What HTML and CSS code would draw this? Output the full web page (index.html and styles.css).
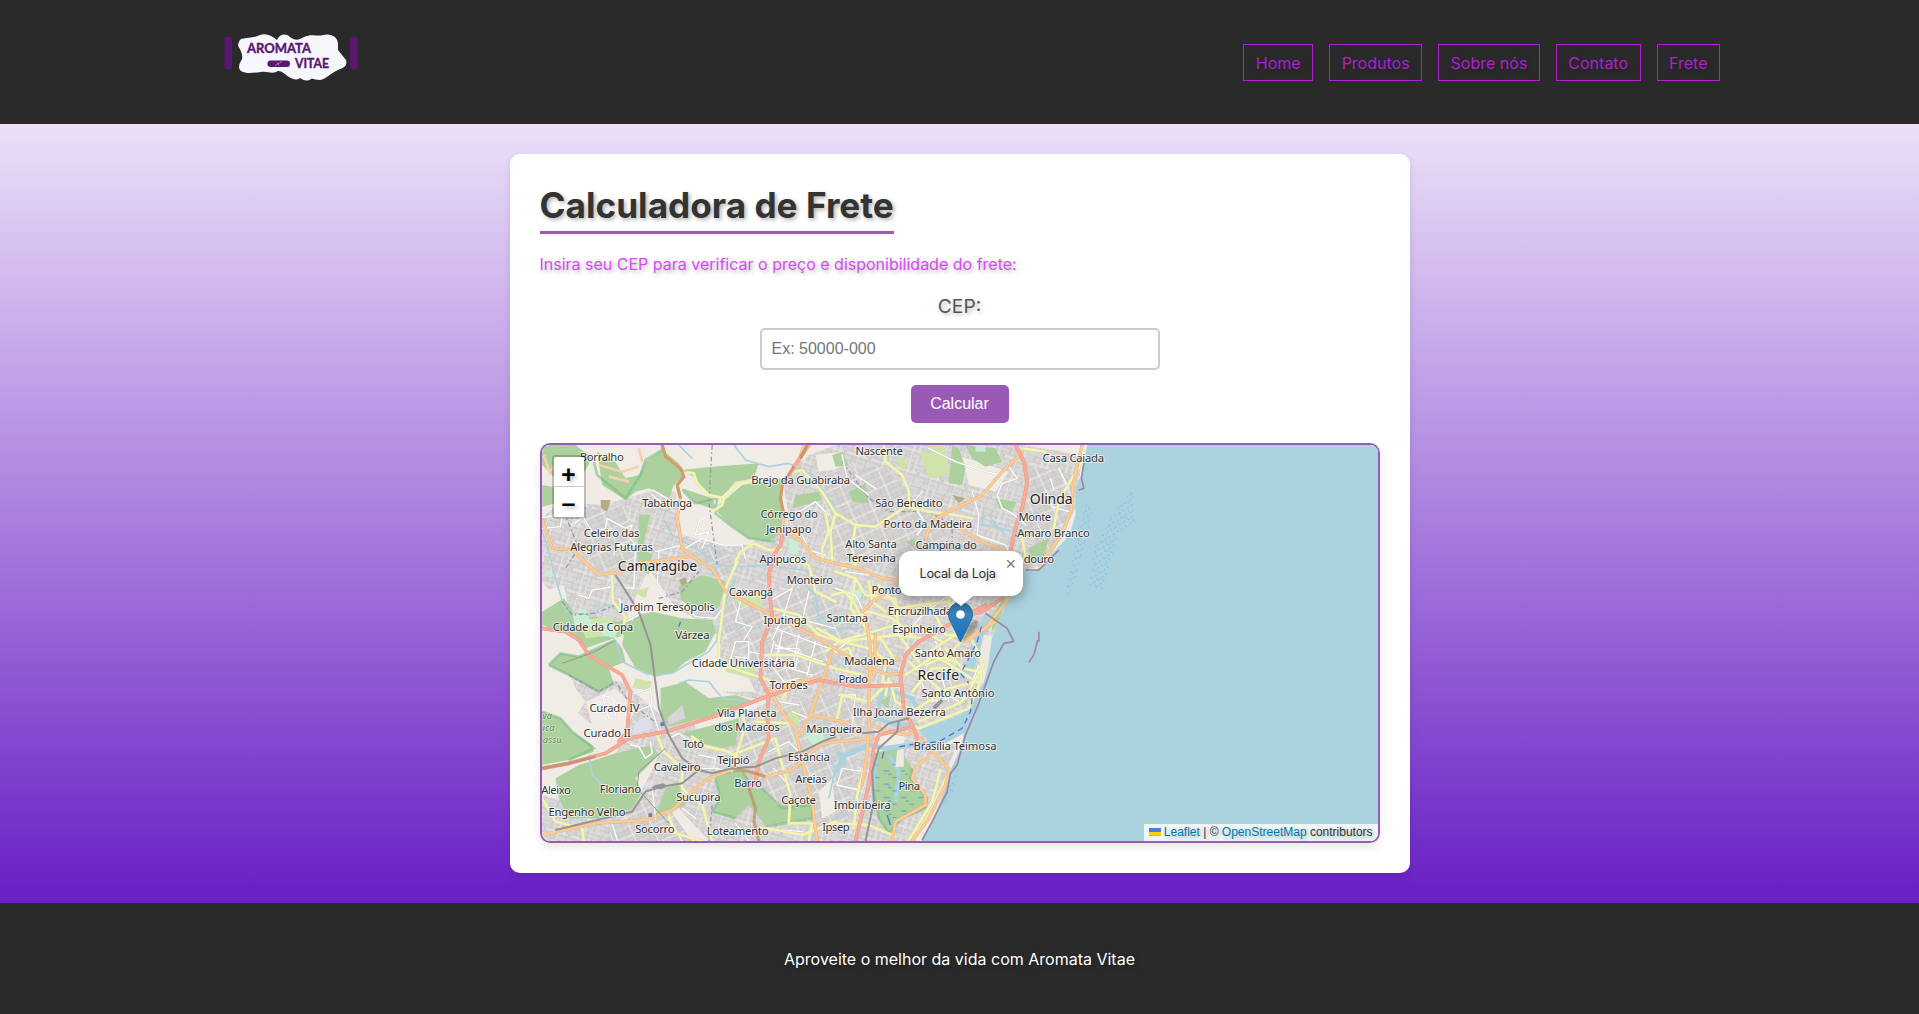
FILE: index.html
```html
<!DOCTYPE html>
<html lang="pt-BR">
<head>
<meta charset="utf-8">
<title>Aromata Vitae - Frete</title>
<link rel="stylesheet" href="styles.css">
</head>
<body>
<header class="header">
  <a class="logo" href="#" aria-label="Aromata Vitae">
    <svg viewBox="0 0 135 50" width="135" height="50">
      <rect class="logo-bar" x="0.5" y="2.5" width="7.5" height="33" rx="3"/>
      <rect class="logo-bar" x="126" y="2.5" width="7.5" height="33" rx="3"/>
      <path class="logo-cloud" d="M17 5C24 3 30 4 36 1C43-1 48 2 53 6C56 0 61-1 66 3C72 8 76 5 80 3C88-1 94 3 99 1C107-1 114 3 114 10V16L122 26C124 32 119 34 114 36C107 39 102 45 96 46C91 46 89 44 87 45C83 48 79 46 76 44C72 47 69 45 65 43C60 40 56 35 52 38C47 40 43 37 37 38C29 39 22 40 17 37C13 33 16 29 18 25C19 21 17 18 16 15C13 12 14 8 17 5Z"/>
      <text class="logo-text" x="23" y="18.5" textLength="64" lengthAdjust="spacingAndGlyphs">AROMATA</text>
      <text class="logo-text" x="71" y="34" textLength="34" lengthAdjust="spacingAndGlyphs">VITAE</text>
      <rect class="logo-bar" x="43.5" y="26.5" width="22.5" height="6.5" rx="3.2"/>
      <path class="logo-sprig" d="M51 31.5L58 27.5M53 28.5L55 31.5"/>
    </svg>
  </a>
  <nav class="nav">
    <a href="#">Home</a><a href="#">Produtos</a><a href="#">Sobre nós</a><a href="#">Contato</a><a href="#">Frete</a>
  </nav>
</header>
<main class="main">
  <section class="card">
    <h1 class="title">Calculadora de Frete</h1>
    <p class="intro">Insira seu CEP para verificar o preço e disponibilidade do frete:</p>
    <form class="form">
      <label class="label" for="cep">CEP:</label>
      <input class="input" id="cep" type="text" placeholder="Ex: 50000-000">
      <button class="button" type="button">Calcular</button>
    </form>
    <div class="map">
      <svg class="map-tiles" viewBox="19.5 30 2508 1188" preserveAspectRatio="none">
        <defs>
          <pattern id="blocks" width="76" height="64" patternUnits="userSpaceOnUse" patternTransform="rotate(17)">
            <rect width="76" height="64" fill="#dbd9d8"/>
            <path d="M0 8H76M0 24H34M40 20H76M0 40H76M0 54H50M10 0V24M26 8V40M44 0V40M60 20V64M36 40V64M16 40V64" stroke="#c8c5c3" stroke-width="2.6" fill="none"/>
            <path d="M0 32H76M34 0V64M52 0V30" stroke="#ececeb" stroke-width="2.4" fill="none"/>
            <path d="M4 12h5v8h-5zM64 26h8v10h-8zM20 44h12v6H20z" fill="#cdcac8"/>
          </pattern>
          <pattern id="blocks-b" width="62" height="54" patternUnits="userSpaceOnUse" patternTransform="rotate(-24)">
            <rect width="62" height="54" fill="#d7d5d4"/>
            <path d="M0 6H62M0 15H62M0 33H30M0 42H62M8 0V54M18 0V27M38 10V54M50 0V40" stroke="#c5c2c0" stroke-width="2.4" fill="none"/>
            <path d="M0 25H62M28 0V54" stroke="#eeeeed" stroke-width="2.6" fill="none"/>
          </pattern>
          <pattern id="reef" width="20" height="22" patternUnits="userSpaceOnUse" patternTransform="rotate(15)">
            <path d="M2 3h3v3h-3zM12 12h3v4h-3zM8 19h3v2h-3zM17 1h2v3h-2z" fill="#72b2dc"/>
          </pattern>
          <pattern id="marsh" width="52" height="40" patternUnits="userSpaceOnUse">
            <path d="M4 8h18M30 28h14M18 18h10" stroke="#459fe0" stroke-width="3"/>
          </pattern>
          <g id="street">
            <path d="M20 248L80 238L75 275L20 280M118 265L142 245L170 290L210 280L215 250L270 280L290 270L275 300L300 330L295 460L262 458M300 330L240 330L235 360M360 350L440 330M370 350L365 460L400 505M80 190L145 165M352 165L395 190L390 210L350 180M480 300L520 290L500 340M440 345L500 310L560 330L620 330L630 370M480 300L490 260L520 240M130 480L160 490L170 465L235 455M440 500L480 545L540 550L560 520M250 490L290 555M250 490L270 560L310 540M620 480L600 560L650 575L625 615M770 460L745 540L710 615M770 460L700 500M820 470L800 560M745 540L900 580M840 200L800 225L760 240M840 200L880 240M800 300L820 345L870 360"/>
            <path d="M920 60L935 130L1000 180M960 120L1020 160M1180 40L1260 80L1350 110L1400 120L1420 85M1420 95L1445 130L1400 145L1385 180L1400 220L1430 235L1470 270M1310 170L1330 240L1325 300M1325 300L1410 330L1420 350M1530 165L1550 215L1600 230M1545 130L1555 165M1130 205L1170 265L1145 300M1160 170L1130 205M1570 100L1600 160M930 410L1000 420M900 460L960 480L1000 560M1110 600L1160 540L1240 480M1260 490L1230 540L1310 560M900 650L960 600"/>
            <path d="M580 690L600 620L640 620L640 670L600 665M640 650L690 660M715 620L700 680L745 740L790 730M720 640L790 640L780 700M770 830L820 850M730 800L790 810M200 780L235 790L240 840L220 850L200 780M295 775L345 760L350 810L300 830M340 800L375 900M285 930L310 935L330 970L350 955L345 920M400 910L430 895L450 910M490 960L540 970L535 1000L500 1000M540 1000L590 1010M700 950L760 920L790 950M715 1000L750 1040M910 780L960 780L950 870M905 1050L920 1000L985 1010L970 1065L905 1050M1150 720L1180 800L1240 790M1220 730L1240 800M1200 620L1250 700M1330 690L1300 770M1200 760L1270 800M440 1120L480 1150M230 1165L245 1215M400 1150L440 1218M600 1165L640 1218M690 1180L800 1190M350 1060L360 1150M1000 870L1030 890M1170 960L1140 1010M740 590L720 690M790 600L770 700M840 620L815 720M720 580L880 640M720 630L860 680M700 680L830 720"/>
          </g>
          <g id="secondary">
            <path d="M455 112L475 115L485 145L520 180L560 188L610 145L650 138M565 190L560 210L530 230M600 380L615 350L655 325L700 345L735 345M605 380L570 460L550 615M230 420L232 500L270 545L265 570M765 115L800 105L860 170L900 235L960 270L1020 275L1110 215L1180 230L1230 235L1310 250M870 235L880 290L860 340L862 380M900 235L885 290L890 380M1045 30L1050 80L1100 120L1120 170L1120 200M960 270L950 340L960 390L920 400M760 370L820 390L840 470L900 500M710 520L790 540L850 600L900 615M1640 80L1570 195L1555 280M1460 40L1530 50M1455 290L1470 360L1440 420"/>
            <path d="M890 480L930 470L960 510L1000 600L1040 615L1080 680M900 410L960 430L990 480L1080 490M930 560L1000 530L1070 550L1130 600M960 430L945 520L1000 590M1000 440L1010 500L1050 530M900 560L960 540M1030 450L1090 520L1150 510L1240 500M1080 490L1090 600L1150 680M1180 500L1230 600L1300 600M1140 570L1220 620M1240 490L1260 600L1180 650M900 615L1000 640L1060 680M900 650L940 640L960 690M1000 620L1050 690L1040 740L1100 760M1230 640L1280 700L1330 710M1130 640L1230 680L1330 745M1170 690L1240 660L1280 615M1120 680L1220 770L1290 790M1110 720L1200 660L1260 680M1130 770L1190 700L1240 700M1310 615L1340 680L1335 740L1300 820L1150 880L1130 870M1345 690L1280 800L1150 860M1065 740L1080 800L1140 830M1130 830L1240 760L1320 740M560 690L700 735M550 615L550 690M690 660L780 660L900 700L980 720M700 740L760 760M615 820L630 870L600 970M660 860L770 865M590 960L720 910L740 990L765 1080L760 1160M470 905L510 935L580 950L600 970M365 900L385 950L440 1000L440 1060L500 1110L530 1218M760 760L740 790M580 1190L700 1180L800 1200L900 1160M1215 1005L1190 1100L1120 1215M1240 1005L1200 1110L1130 1215M985 1000L965 1080L955 1180M900 1165L1000 1170L1080 1205M820 1218L830 1165L760 1165M400 1145L420 1195L500 1218M20 1090L60 1160L140 1180L145 1218M905 850L920 780L1000 800L1040 760M1050 780L1060 730M845 580L920 620L1080 600L1160 610M870 650L910 620L1080 570"/>
          </g>
          <g id="primary">
            <path d="M380 30L390 65L435 100L445 125L425 150L435 190L425 250L440 340L500 385L530 400L570 470L650 510L710 540L830 600L900 640M20 255L50 340L110 345L190 420L260 410L310 385L460 365M755 290L800 320L840 370L900 385L970 400L1040 430L1090 435M805 30L790 80L740 150L735 190L745 240L740 290M1460 55L1400 110L1340 180L1270 215L1220 240L1190 260L1170 310M1260 275L1340 320L1420 355M1640 30L1630 70L1615 140L1605 230L1580 300L1540 350L1510 390M1380 560L1290 610M1420 490L1350 580L1290 620M980 530L1010 500L1060 470"/>
            <path d="M900 640L960 680L1005 700L1060 720L1095 715M990 540L1005 640L1000 800L1000 870L995 950L980 1050M1020 600L1015 720M700 760L740 830L780 880L795 960L830 1100L845 1218M890 650L860 740L820 850L790 900M715 770L780 740L850 730M940 865L830 840M20 1200L180 1165L330 1155L410 1125L480 1060L520 1030L600 1000L690 1025L770 1005L850 930L900 920L1020 910M1135 890L1170 930L1240 1000L1230 1050L1180 1150L1130 1218M1180 960L1140 1000L1130 1030L1170 1080L1170 1110L1080 1160L1070 1218M1000 870L1060 890L1110 900L1135 890M1010 660L1060 690L1090 670"/>
          </g>
          <g id="trunk">
            <path d="M820 30L775 95M740 300L735 330L715 360L700 420L705 500L710 540L690 600L680 620L675 730L700 780L695 840L700 910L670 980L660 1040L640 1060M1440 30L1465 80L1475 140L1465 200L1440 280L1420 370M1400 490L1340 530L1260 550M1350 510L1230 575L1150 620L1110 660L1095 720L1105 820L1135 880L1145 910M20 580L90 590L130 615L160 660L260 720L285 770L275 890L250 920M20 1000L100 985L210 955L280 910L390 890L550 840L680 790L780 755L850 735L960 755L1100 750M1130 875L1030 900L1015 940L1000 1050L960 1218"/>
          </g>
        </defs>
        <rect x="19" y="30" width="2510" height="1190" fill="#f0ece5"/>
        <path fill="url(#blocks)" d="M20 250L70 200L200 210L340 170L420 170L440 300L560 330L640 330L760 240L740 130L820 60L900 30H1460L1640 60L1620 220L1540 380L1440 420L1400 560V615L1330 700L1320 800L1180 920L1240 1000L1140 1218H520L430 1120L290 1218H20V1080L130 1110L300 1110L370 960L230 980L300 820L240 760L150 800L170 870L110 820L100 720L260 740L400 860L460 850L500 900L700 800L560 770L570 700L500 560L420 520L340 400L250 600L150 620L100 530L20 440Z"/>
        <path fill="url(#blocks-b)" d="M870 120L1040 90L1150 200L1240 300L1170 380L940 400L860 300ZM1470 90L1620 120L1590 280L1530 350L1460 300ZM560 500L850 450L950 560L880 760L700 720L560 600ZM620 860L900 760L980 850L930 1200L700 1150L560 960ZM130 230L270 210L310 400L180 410ZM440 350L560 330L600 380L560 440ZM290 1090L400 1120L470 1218H210ZM1150 800L1240 720L1340 740L1280 820ZM1200 940L1270 920L1230 1010Z"/>
        <path fill="#f0ede5" d="M450 30H780V90L700 95L670 85L530 95L445 90ZM1280 65L1420 110L1380 170L1300 150ZM20 470L85 450L100 520L20 530ZM20 720L100 710L120 760L150 800L110 860L60 870L20 830ZM430 680L540 600L560 690L640 730L660 770L560 770L480 740L400 750ZM160 40L260 30L320 60L300 120L260 110ZM840 60L920 50L910 100L850 110ZM1060 1100L1000 1000L1020 890L1110 900L1100 940ZM850 1070L890 1030L900 1130L860 1150Z"/>
        <g fill="#add19e">
          <path d="M20 30H120L170 70L130 140L80 150L20 90ZM185 50L240 80L270 130L310 120L330 80L380 45L430 85L445 120L415 150L400 190L340 160L300 170L270 195L200 150ZM440 105L530 95L670 85L655 130L600 140L560 185L520 180L480 130ZM550 210L620 150L740 130L735 200L745 290L700 320L640 310L580 265L545 230ZM440 160L530 190L545 225L480 205ZM20 150L75 160L60 205L20 215ZM310 240L345 240L320 340L350 360L340 420L305 390ZM430 455L500 420L570 440L550 520L440 510Z"/>
          <path d="M20 530L85 490L130 550L180 545L250 560L310 540L350 530L440 550L530 555L540 590L510 650L450 680L410 715L360 725L300 700L260 630L265 600L150 640L110 600L20 570ZM40 690L75 655L130 665L240 615L260 640L270 680L220 700L235 745L190 770L110 725ZM375 760L450 740L520 790L600 780L660 800L620 820L480 855L400 875L375 840ZM20 830L75 850L110 890L170 930L175 950L100 975L20 990ZM60 1030L130 990L240 955L350 930L370 960L300 1030L320 1070L290 1120L190 1150L100 1150L70 1090ZM440 895L610 850L600 930L560 940L500 925ZM390 1060L430 1050L450 1110L400 1130L360 1140ZM540 1020L620 1005L650 1060L680 1060L720 1110L830 1110V1150L740 1165L690 1170L640 1110L600 1150L530 1130L555 1090Z"/>
          <path d="M1015 955L1090 935L1130 1000L1125 1030L1175 1090L1170 1120L1100 1150L1060 1195L1030 1150L1005 1020ZM1250 30L1270 40L1290 100L1280 150L1240 145ZM1290 30L1380 40L1400 80L1350 95L1310 70ZM940 170L990 145L1000 205L950 200ZM1380 190L1440 200L1430 235L1390 220ZM1480 340L1540 310L1520 380L1480 390ZM1370 540L1410 480L1395 550L1370 590ZM1030 800L1065 780L1060 820ZM1110 320L1140 310L1135 340ZM890 60L920 50L940 90L900 95ZM780 180L850 170L860 195L770 220Z"/>
        </g>
        <path fill="#cfe3ab" d="M1150 50L1235 60L1240 120L1180 130ZM590 480L680 470L680 520L610 510ZM760 830L790 820L790 870L750 870ZM580 690L660 700L650 730L570 710ZM1180 30H1230V70H1190ZM1080 60L1120 80L1100 110ZM130 555L230 545L240 600L150 610ZM300 730L350 740L340 765L290 760ZM290 470L340 455L330 490Z"/>
        <path fill="#c8efd4" d="M110 530L150 520L170 570L120 580ZM200 565L250 570L240 610L200 600ZM810 900L860 890L870 920L830 930ZM20 420L50 400L50 430ZM1320 30h30v20h-30zM760 310l30 10-5 40-25-8zM940 460l40 10-10 35-30-10z"/>
        <path fill="#e2ddec" d="M300 860L345 840L350 880L290 900ZM320 1050L350 1035V1060Z"/>
        <path fill="#d7d5d6" d="M395 850L440 810L450 850L400 870Z"/>
        <path fill="#b6ac83" d="M1250 180L1290 190L1270 205ZM195 195l30 0-10 35-18-10zM430 435l20-8 5 18-15 8z"/>
        <g fill="none" stroke="#f7cfae" stroke-width="8">
          <path d="M190 90L260 110L310 95M220 125L280 140M310 40L320 80M40 110L70 85M75 215L115 220M90 140L60 180M25 60L45 120"/>
        </g>
        <g class="water">
          <path d="M595 30L630 75L700 95L760 85L830 120L900 220M20 290L40 350L60 430L90 530L160 540L210 510L260 530M385 255L410 300L480 340L550 390L620 395L700 390L760 400L830 410M550 390L530 420M600 430L560 520L545 615L520 650L450 690L410 715L350 720M430 745L460 735L520 740L560 790L640 800M240 615L260 680L340 720M160 960L170 1020L210 1060M780 420L840 480L850 560L900 600M1360 240L1380 270L1410 300M1345 215L1340 270L1370 275L1440 290L1500 230M870 950L900 1000L880 1090M430 30L470 70M520 330L560 360M640 560L600 590M240 1140L230 1200M900 1150L930 1120M1150 340L1200 360M830 500L850 540L900 580L970 580L1000 560"/>
          <path d="M1050 690L1060 760L1030 790L1030 850L1080 870L1150 870M1050 760L1130 790L1150 830" stroke-width="12"/>
          <path d="M900 1010L930 960L1000 930L1050 940L1130 930L1180 940" stroke-width="15"/>
          <path d="M1060 960L1090 1010L1080 1100M1020 960L1015 1060M905 950l20 20v20" stroke-width="12"/>
        </g>
        <path class="sea" d="M1655 30L1637 120L1620 160V240L1602 300L1560 345L1535 380L1500 405L1460 408L1440 440L1415 490L1395 550L1378 590L1368 615L1358 690L1345 740L1310 800L1275 840L1150 885L1170 905L1185 935L1230 925L1285 895L1280 930L1245 1005L1230 1060L1190 1160L1155 1220H2530V30Z"/>
        <path class="sea" d="M1350 530L1375 560L1345 600L1320 690L1310 710L1275 735L1270 715L1290 690L1320 600Z"/>
        <path fill="url(#marsh)" d="M1015 990L1090 985L1125 1030L1165 1090L1100 1150L1030 1150Z"/>
        <path fill="#edeae3" d="M1345 600L1370 603L1358 680L1340 740L1335 700L1330 670ZM1085 945H1105V995H1080Z"/>
        <path fill="url(#reef)" d="M1790 160L1800 260L1750 290L1700 470L1660 450L1680 330L1730 240ZM1650 200L1670 230L1640 360L1600 490L1590 470L1620 330ZM1260 1000L1275 970L1250 1080L1220 1110Z"/>
        <g fill="none" stroke="#75b981" stroke-width="8" opacity=".55">
          <path d="M175 80L185 120L270 190L315 120L330 75L380 45M440 165L480 205L545 190L540 235L590 275L640 310L720 320M40 690L75 655L130 665L240 615M40 690L110 725L190 770L235 745M20 830L75 850L110 890L175 940L100 975M540 1020L620 1005L650 1060M680 1060L740 1120L830 1110V1150L690 1175M540 1030L555 1090L530 1130L600 1150M1015 955L1005 1020L1030 1150L1060 1195L1100 1150L1170 1120L1175 1090L1125 1030L1130 1000"/>
        </g>
        <g fill="none" stroke="#a392ad" stroke-width="4" stroke-dasharray="14 8 5 8">
          <path d="M530 30L520 200L545 390M85 230L130 340L90 400M80 500L110 540L180 535L240 510M100 720L190 770L240 740L280 800L370 870M370 490L440 470L490 410M920 80L1000 190L1060 230L1180 230L1250 270L1250 320M530 1110L520 1218"/>
        </g>
        <use href="#street" class="street-case"/><use href="#street" class="street"/>
        <use href="#secondary" class="secondary-case"/><use href="#secondary" class="secondary"/>
        <use href="#primary" class="primary-case"/><use href="#primary" class="primary"/>
        <use href="#trunk" class="trunk-case"/><use href="#trunk" class="trunk"/>
        <path d="M380 30L390 65L435 100L445 125L425 150L435 190M815 30L795 70M775 95L740 150L735 190L745 240M20 1000L100 985L180 965M640 1060L660 1120L655 1160L670 1218M590 1000L650 1012L690 1025" fill="none" stroke="#b78b5c" stroke-width="9" opacity=".7"/>
        <g fill="none" stroke="#959595" stroke-width="6">
          <path d="M240 420L310 530L345 630L370 820L400 900L440 970L490 1005L530 1015L590 1000L660 995L720 970L800 950L860 920L900 905M490 1005L440 1045L380 1055L330 1070L290 1130L60 1185M980 895L1030 890L1060 865L1120 850M1090 860L1085 890L1030 940L1010 1010L1015 1100L990 1218"/>
          <path d="M1195 820L1220 795" stroke-width="11"/>
          <path d="M230 620L180 650L80 685M390 940L310 1010L305 1060L400 1165" stroke-width="3"/>
        </g>
        <path d="M345 1060l15-10 25-5 10 10-20 8z" fill="#959595"/>
        <path d="M375 862h11v11h-11zM339 1135h11v11h-11z" fill="#6f79b8"/>
        <g fill="none" stroke="#9d87a3" stroke-width="6">
          <path d="M1647 70L1638 130L1645 160L1630 165M1570 345L1530 385L1510 405L1470 405M1435 620L1405 625L1375 680L1330 805L1290 900L1280 935L1265 990L1245 1015L1235 1070L1190 1160L1160 1215M1507 615L1495 660L1480 682M1350 535L1415 580L1435 620M1510 590V620" stroke-width="5"/>
        </g>
        <path d="M1338 575L1325 620L1300 670L1275 715L1300 745M1310 790L1305 830L1280 880L1210 920L1120 930L1080 938" fill="none" stroke="#5370ee" stroke-width="4" stroke-dasharray="18 13"/>
        <path d="M1045 950L1040 970M1055 1140L1065 1170M1440 300L1450 310M435 560L430 575" fill="none" stroke="#4878e8" stroke-width="4"/>
        <g class="place">
          <text x="133" y="77" textLength="132">Borralho</text>
          <text x="647" y="147" textLength="297">Brejo da Guabiraba</text>
          <text x="320" y="215" textLength="150">Tabatinga</text>
          <text x="675" y="250" textLength="172">Córrego do</text>
          <text x="692" y="293" textLength="136">Jenipapo</text>
          <text x="145" y="306" textLength="167">Celeiro das</text>
          <text x="104" y="348" textLength="248">Alegrias Futuras</text>
          <text x="672" y="384" textLength="140">Apipucos</text>
          <text x="754" y="446" textLength="139">Monteiro</text>
          <text x="580" y="482" textLength="133">Caxangá</text>
          <text x="254" y="527" textLength="284">Jardim Teresópolis</text>
          <text x="684" y="567" textLength="130">Iputinga</text>
          <text x="873" y="561" textLength="125">Santana</text>
          <text x="52" y="589" textLength="241">Cidade da Copa</text>
          <text x="419" y="613" textLength="103">Várzea</text>
          <text x="960" y="60" textLength="142">Nascente</text>
          <text x="1521" y="80" textLength="185">Casa Caiada</text>
          <text x="1019" y="216" textLength="202">São Benedito</text>
          <text x="1044" y="278" textLength="266">Porto da Madeira</text>
          <text x="1449" y="258" textLength="98">Monte</text>
          <text x="1445" y="306" textLength="218">Amaro Branco</text>
          <text x="929" y="338" textLength="155">Alto Santa</text>
          <text x="933" y="381" textLength="148">Teresinha</text>
          <text x="1140" y="341" textLength="184">Campina do</text>
          <text x="1465" y="384" textLength="91">douro</text>
          <text x="1008" y="477" textLength="90">Ponto</text>
          <text x="1057" y="540" textLength="193">Encruzilhada</text>
          <text x="1070" y="594" textLength="161">Espinheiro</text>
          <text x="469" y="696" textLength="309">Cidade Universitária</text>
          <text x="702" y="762" textLength="115">Torrões</text>
          <text x="162" y="830" textLength="150">Curado IV</text>
          <text x="545" y="845" textLength="178">Vila Planeta</text>
          <text x="144" y="905" textLength="142">Curado II</text>
          <text x="536" y="888" textLength="197">dos Macacos</text>
          <text x="812" y="893" textLength="168">Mangueira</text>
          <text x="441" y="939" textLength="64">Totó</text>
          <text x="545" y="986" textLength="97">Tejipió</text>
          <text x="757" y="978" textLength="126">Estância</text>
          <text x="355" y="1008" textLength="140">Cavaleiro</text>
          <text x="596" y="1055" textLength="83">Barro</text>
          <text x="779" y="1045" textLength="95">Areias</text>
          <text x="17" y="1077" textLength="89">Aleixo</text>
          <text x="193" y="1075" textLength="124">Floriano</text>
          <text x="422" y="1099" textLength="133">Sucupira</text>
          <text x="737" y="1107" textLength="104">Caçote</text>
          <text x="39" y="1144" textLength="231">Engenho Velho</text>
          <text x="299" y="1194" textLength="118">Socorro</text>
          <text x="514" y="1199" textLength="185">Loteamento</text>
          <text x="895" y="1122" textLength="171">Imbiribeira</text>
          <text x="860" y="1188" textLength="83">Ipsep</text>
          <text x="1138" y="666" textLength="199">Santo Amaro</text>
          <text x="926" y="690" textLength="152">Madalena</text>
          <text x="909" y="744" textLength="89">Prado</text>
          <text x="1158" y="786" textLength="219">Santo Antônio</text>
          <text x="952" y="842" textLength="279">Ilha Joana Bezerra</text>
          <text x="1134" y="945" textLength="249">Brasília Teimosa</text>
          <text x="1089" y="1064" textLength="65">Pina</text>
        </g>
        <g class="place city">
          <text x="247" y="408" textLength="238">Camaragibe</text>
          <text x="1483" y="207" textLength="128">Olinda</text>
          <text x="1146" y="735" textLength="125">Recife</text>
        </g>
        <g class="reserve">
          <text x="21" y="852">va</text><text x="21" y="889">ica</text><text x="22" y="924">assu</text>
        </g>
      </svg>
      <div class="zoom"><a href="#">+</a><a href="#">−</a></div>
      <svg class="marker" viewBox="0 0 50 45" width="50" height="45">
        <defs>
          <linearGradient id="pin" x1="0" y1="0" x2="0" y2="1"><stop offset="0" stop-color="#2e6c97"/><stop offset=".3" stop-color="#3883b7"/><stop offset="1" stop-color="#126fc6"/></linearGradient>
          <filter id="soft" x="-30%" y="-30%" width="160%" height="160%"><feGaussianBlur stdDeviation="1.6"/></filter>
        </defs>
        <path d="M12 41L22 21C25 17 31 17 30 22C29 28 20 35 12 41Z" fill="#000" opacity=".3" filter="url(#soft)"/>
        <path d="M12.5.5C5.8.5.5 5.8.5 12.5c0 3.400 1.500 6.100 3 9L12.500 40l9-18.500c1.500-2.900 3-5.600 3-9C24.500 5.800 19.200.5 12.500.5Z" fill="url(#pin)" stroke="#2b6d9f"/>
        <circle cx="12.500" cy="12.500" r="4.300" fill="#fff"/>
      </svg>
      <div class="popup"><span class="popup-text">Local da Loja</span><span class="popup-close">×</span></div>
      <div class="attribution">
        <svg width="12" height="8" viewBox="0 0 12 8"><path fill="#4c7be1" d="M0 0h12v4H0z"/><path fill="#ffd500" d="M0 4h12v3H0z"/><path fill="#e0bc00" d="M0 7h12v1H0z"/></svg>
        <a href="#">Leaflet</a> <span class="bar">|</span> © <a href="#">OpenStreetMap</a> contributors
      </div>
    </div>
  </section>
</main>
<footer class="footer"><p>Aproveite o melhor da vida com Aromata Vitae</p></footer>
</body>
</html>
```
FILE: styles.css
```css
* { box-sizing: border-box; }
body {
  margin: 0;
  height: 1014px;
  display: flex;
  flex-direction: column;
  overflow: hidden;
  font-family: Inter, sans-serif;
  font-size: 16px;
  text-shadow: 2px 2px 4px rgba(0, 0, 0, 0.3);
}
a { text-decoration: none; }

.header {
  flex: none;
  height: 124px;
  padding: 0 199px 0 223.5px;
  display: flex;
  justify-content: space-between;
  align-items: flex-start;
  background: #2a2a2a;
}
.logo { margin-top: 34px; line-height: 0; }
.logo svg { overflow: visible; text-shadow: none; }
.logo-bar { fill: #5b176f; }
.logo-cloud { fill: #f6f6fd; }
.logo-text { fill: #5b176f; font: 700 13.5px Lato, sans-serif; stroke: #5b176f; stroke-width: 0.4px; }
.logo-sprig { stroke: #b98bc6; stroke-width: 0.8; fill: none; }
.nav { display: flex; gap: 16px; margin-top: 44px; }
.nav a {
  height: 37px;
  padding: 8px 11.5px;
  border: 1px solid #b01fd0;
  color: #b01fd0;
  line-height: 20px;
}

.main {
  flex: none;
  height: 779px;
  padding-top: 30px;
  display: flex;
  justify-content: center;
  align-items: flex-start;
  background: linear-gradient(#ebe0f8, #691fc5);
}
.card {
  width: 900px;
  height: 719px;
  padding: 30px;
  display: flex;
  flex-direction: column;
  align-items: flex-start;
  background: #fff;
  border-radius: 10px;
  box-shadow: 0 4px 8px rgba(0, 0, 0, 0.1);
}
.title {
  margin: 0;
  height: 50px;
  border-bottom: 3px solid #9b59b6;
  color: #333;
  font-size: 35.2px;
  font-weight: 700;
  line-height: 42px;
  white-space: nowrap;
}
.intro { margin: 20px 0 0; line-height: 20px; color: #d54df0; }
.form {
  width: 100%;
  margin-top: 20px;
  display: flex;
  flex-direction: column;
  align-items: center;
}
.label { height: 24px; margin-bottom: 10px; color: #555; font-size: 19.2px; line-height: 25px; }
.input {
  width: 400px;
  height: 42px;
  padding: 10px;
  border: 2px solid #ccc;
  border-radius: 5px;
  background: #fff;
  font: 16px "Liberation Sans", Arial, sans-serif;
}
.input::placeholder { color: #757575; }
.button {
  width: 98px;
  height: 38px;
  margin-top: 15px;
  padding: 0;
  border: 0;
  border-radius: 5px;
  background: #9b59b6;
  color: #fff;
  font: 16px "Liberation Sans", Arial, sans-serif;
}

.map {
  position: relative;
  flex: none;
  width: 840px;
  height: 400px;
  margin-top: 20px;
  border: 2px solid #9b59b6;
  border-radius: 10px;
  overflow: hidden;
  box-shadow: 0 4px 8px rgba(0, 0, 0, 0.1);
}
.map-tiles { display: block; width: 836px; height: 396px; text-shadow: none; }
.sea { fill: #aad3df; }
.water { fill: none; stroke: #aad3df; stroke-width: 5; }
.street-case, .street, .secondary-case, .secondary, .primary-case, .primary, .trunk-case, .trunk {
  fill: none;
  stroke-linejoin: round;
  stroke-linecap: round;
}
.street-case { stroke: #c9c7c5; stroke-width: 5.5; }
.street { stroke: #fff; stroke-width: 4; }
.secondary-case { stroke: #dcdda0; stroke-width: 9; }
.secondary { stroke: #f3f6b3; stroke-width: 7; }
.primary-case { stroke: #e3b074; stroke-width: 9.5; }
.primary { stroke: #fccb98; stroke-width: 7.5; }
.trunk-case { stroke: #e8957e; stroke-width: 11; }
.trunk { stroke: #f8ab97; stroke-width: 9; }
.place {
  font: 34px "Noto Sans", sans-serif;
  fill: #333;
  stroke: rgba(255, 255, 255, 0.65);
  stroke-width: 6px;
  stroke-linejoin: round;
  paint-order: stroke;
}
.city { font-size: 42px; fill: #222; }
.reserve { font: italic 28px "Noto Sans", sans-serif; fill: #5b8055; stroke: #dfeeda; stroke-width: 3px; paint-order: stroke; }

.zoom {
  position: absolute;
  top: 10px;
  left: 10px;
  border: 2px solid rgba(0, 0, 0, 0.2);
  border-radius: 4px;
  background-clip: padding-box;
}
.zoom a {
  display: block;
  width: 30px;
  height: 30px;
  background: #fff;
  color: #000;
  font: 700 23px/34px "DejaVu Sans Mono", monospace;
  text-align: center;
}
.zoom a:first-child { border-bottom: 1px solid #ccc; border-radius: 2px 2px 0 0; }
.zoom a:last-child { border-radius: 0 0 2px 2px; }
.marker { position: absolute; left: 406px; top: 157px; overflow: visible; }
.popup {
  position: absolute;
  left: 357px;
  top: 106px;
  width: 124px;
  height: 45px;
  border-radius: 12px;
  background: #fff;
  color: #333;
  font: 12.8px/45px Inter, sans-serif;
  letter-spacing: -0.3px;
  box-shadow: 0 3px 14px rgba(0, 0, 0, 0.4);
}
.popup::after {
  content: "";
  position: absolute;
  left: 50px;
  top: 45px;
  border: 12px solid transparent;
  border-top: 10px solid #fff;
  border-bottom: 0;
}
.popup-text { padding-left: 21px; white-space: nowrap; }
.popup-close {
  position: absolute;
  top: 1px;
  right: 0;
  width: 24px;
  height: 24px;
  color: #757575;
  font: 18px/24px "Liberation Sans", Arial, sans-serif;
  text-align: center;
  text-shadow: none;
}
.attribution {
  position: absolute;
  right: 0;
  bottom: 0;
  width: 234px;
  height: 17px;
  padding: 0 5px;
  background: rgba(255, 255, 255, 0.8);
  color: #333;
  font: 12px/16.8px "Liberation Sans", Arial, sans-serif;
  white-space: nowrap;
}
.attribution a { color: #0078a8; }

.footer {
  flex: none;
  height: 111px;
  display: flex;
  align-items: center;
  justify-content: center;
  background: #2a2a2a;
  color: #fff;
}
.footer p { margin: 0; line-height: 20px; }
```
